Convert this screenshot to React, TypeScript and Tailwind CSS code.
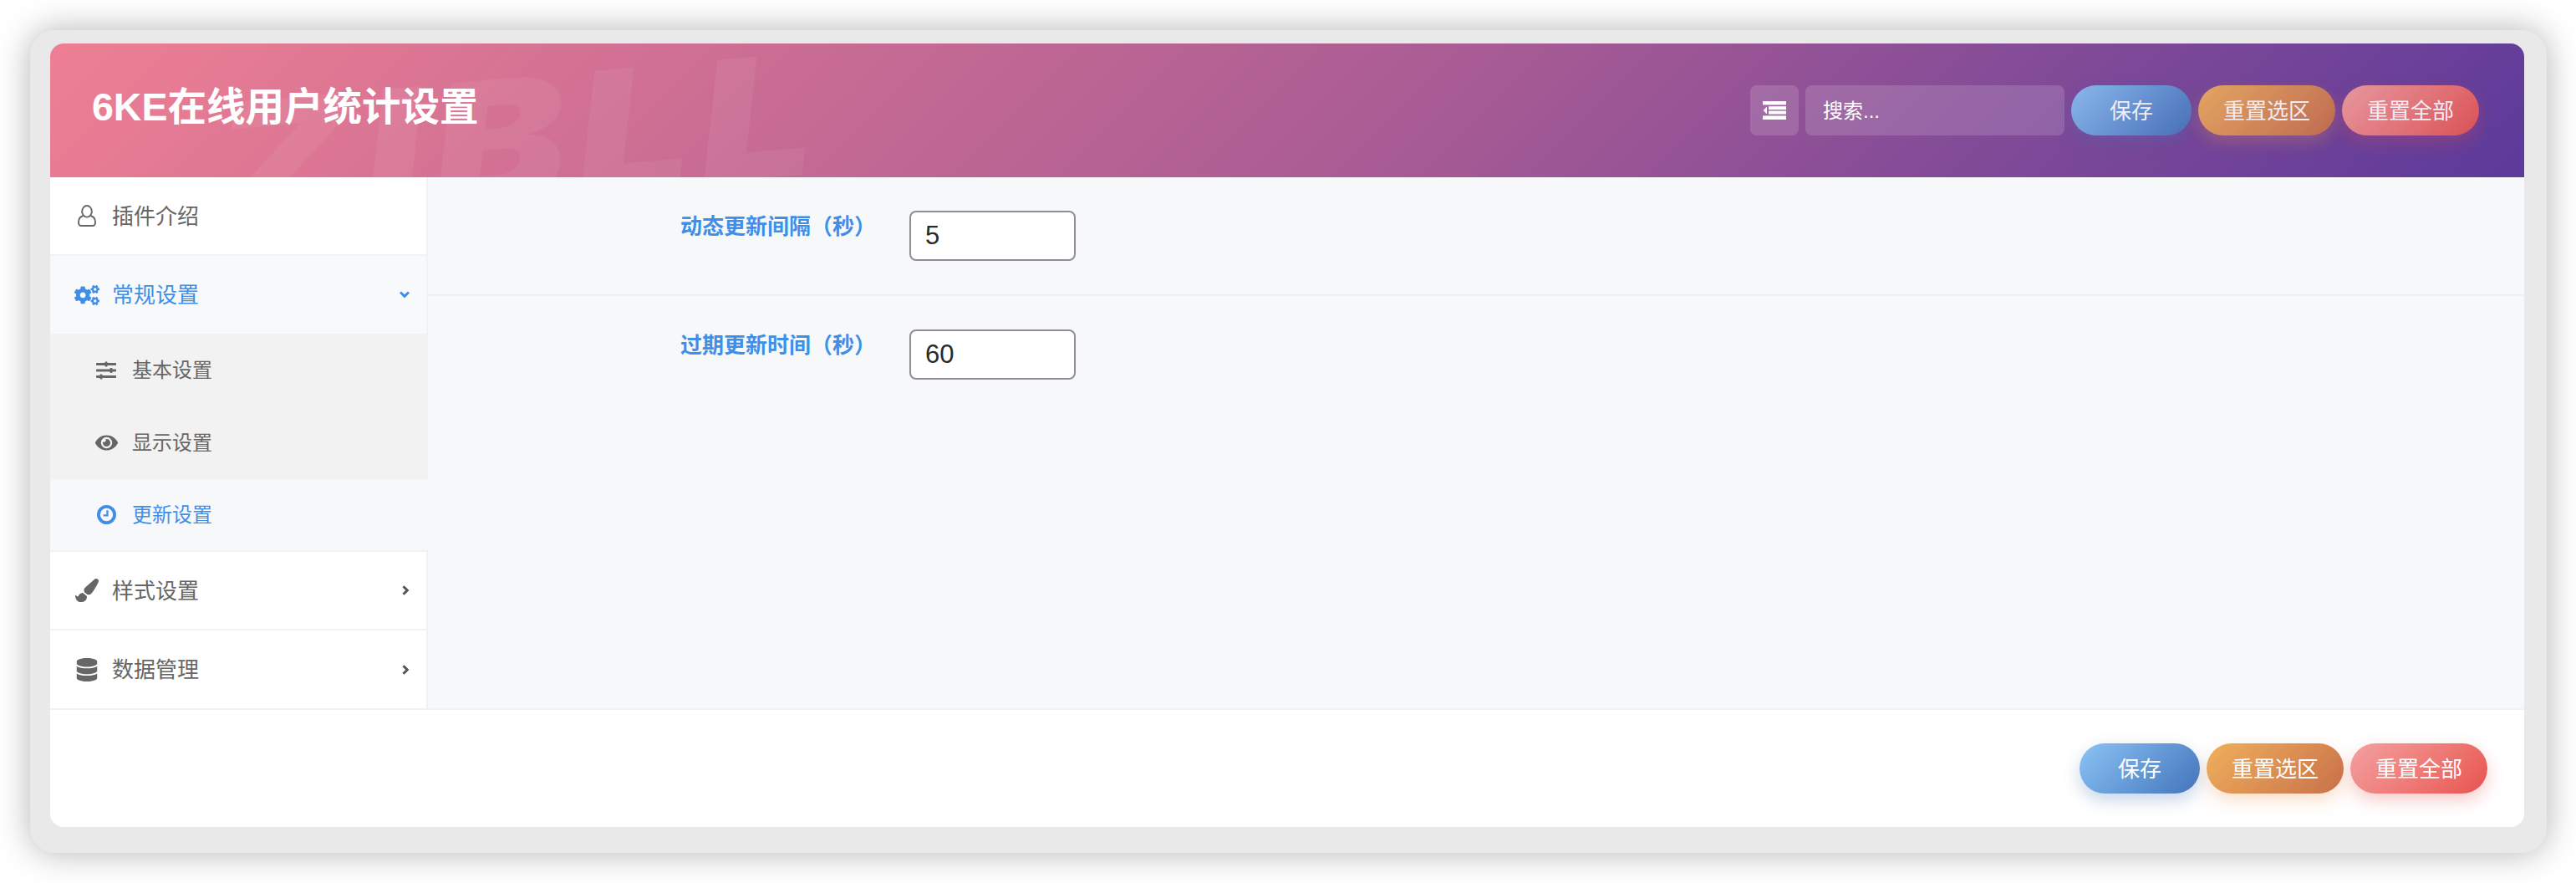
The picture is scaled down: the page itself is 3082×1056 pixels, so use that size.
import React from 'react';
import { FaCogs, FaSlidersH, FaEye, FaPaintBrush, FaDatabase } from 'react-icons/fa';

const UserIcon = () => (
  <svg viewBox="0 0 22 26" className="w-[22px] h-[26px]" fill="none" stroke="currentColor" strokeWidth="1.9">
    <ellipse cx="11" cy="7.8" rx="5.8" ry="6.8" />
    <path d="M6.6 13C3 14 1 16.6 1 20.5v1.3A3.2 3.2 0 0 0 4.2 25h13.6a3.2 3.2 0 0 0 3.2-3.2v-1.3c0-3.9-2-6.5-5.6-7.5" />
  </svg>
);

const ClockIcon = () => (
  <svg viewBox="0 0 24 24" className="w-[23px] h-[23px]" fill="none" stroke="currentColor">
    <circle cx="12" cy="12" r="10" strokeWidth="4" />
    <path d="M13 6.5v6.5H8" strokeWidth="2.4" />
  </svg>
);

const OutdentIcon = () => (
  <svg viewBox="0 0 28 22" className="w-[28px] h-[22px]" fill="currentColor">
    <rect x="0" y="0" width="28" height="4.4" />
    <rect x="7" y="6.2" width="21" height="4" />
    <rect x="7" y="11.6" width="21" height="4" />
    <rect x="0" y="17.4" width="28" height="4.6" />
    <path d="M5 6.4v9.2L0.6 11z" />
  </svg>
);

const ChevronRight = () => (
  <svg viewBox="0 0 9 12" className="w-[9px] h-[12px] text-[#555555]" fill="none" stroke="currentColor" strokeWidth="3">
    <path d="M1.5 1.2 6.3 6l-4.8 4.8" />
  </svg>
);

const ChevronDown = () => (
  <svg viewBox="0 0 12 9" className="w-[12px] h-[9px]" fill="none" stroke="currentColor" strokeWidth="3">
    <path d="M1 1.5 6 6.3l5-4.8" />
  </svg>
);

const MenuRow = ({ icon, label, active, open, chevron = true, className = '' }: any) => (
  <div className={`flex items-center pl-[29px] pr-[20px] ${active ? 'bg-[#f8f9fa] text-[#3f8fe9]' : 'bg-white text-[#666666]'} ${className}`}>
    <span className="w-[30px] flex justify-center">{icon}</span>
    <span className="ml-[15px] text-[26px] flex-1 relative top-[1px]">{label}</span>
    {chevron && (open ? <ChevronDown /> : <ChevronRight />)}
  </div>
);

const SubRow = ({ icon, label, active, className = '' }: any) => (
  <div className={`flex items-center pl-[52px] w-[452px] ${active ? 'bg-[#f6f8fa] text-[#3f8fe9]' : 'bg-[#f2f2f2] text-[#666666]'} ${className}`}>
    <span className="w-[30px] flex justify-center">{icon}</span>
    <span className="ml-[16px] text-[24px]">{label}</span>
  </div>
);

const FieldRow = ({ label, value, last }: { label: string; value: string; last?: boolean }) => (
  <div className={`flex items-start pl-[302px] pt-[40px] ${last ? '' : 'h-[142px] border-b-2 border-[#eeeff1]'}`}>
    <label className="w-[274px] mt-[1px] text-[26px] leading-[36px] font-semibold text-[#3f8fe9]">{label}</label>
    <input
      readOnly
      defaultValue={value}
      className="w-[199px] h-[60px] px-[17px] bg-white border-2 border-[#8e8e93] rounded-[8px] text-[31px] text-[#2a2a2a] font-['Liberation_Sans',sans-serif] outline-none"
    />
  </div>
);

const ActionButtons = ({ header }: { header?: boolean }) => (
  <div className={`flex gap-[8px] text-white text-[26px] ${header ? 'opacity-90' : ''}`}>
    <button className="w-[144px] h-[60px] pt-[2px] rounded-[30px] bg-linear-135 from-[#8bc4f5] to-[#4474bb] shadow-[0_8px_20px_rgba(68,116,187,0.3)]">保存</button>
    <button className="w-[164px] h-[60px] pt-[2px] rounded-[30px] bg-linear-135 from-[#efb05c] to-[#c9704a] shadow-[0_8px_20px_rgba(239,150,80,0.3)]">重置选区</button>
    <button className="w-[164px] h-[60px] pt-[2px] rounded-[30px] bg-linear-135 from-[#f3a0a0] to-[#e8524f] shadow-[0_8px_20px_rgba(232,82,79,0.3)]">重置全部</button>
  </div>
);

export default function App() {
  return (
    <div className="h-[1056px] pt-[36px] pl-[36px] pr-[35px] bg-white font-['Liberation_Sans','Noto_Sans_CJK_SC',sans-serif]">
      <div className="h-[984px] pt-[16px] pb-[31px] pl-[24px] pr-[27px] bg-[#e9e9e9] rounded-[30px] shadow-[0_0_40px_rgba(0,0,0,0.3)]">
        <div className="h-full flex flex-col bg-white rounded-[16px] overflow-hidden">
          {/* Header */}
          <div className="relative h-[160px] shrink-0 flex items-center pl-[50px] pr-[54px] overflow-hidden bg-linear-135/srgb from-[#ee7f93] via-[#a95c94] via-55% to-[#5c3a9b]">
            <span className="absolute left-[197px] top-[45px] origin-left -rotate-[5deg] scale-x-[1.2] text-[200px] leading-none italic font-black tracking-[10px] text-white/6 font-['Inter',sans-serif]">
              ZIBLL
            </span>
            <h1 className="relative -mt-[7px] text-[46.5px] font-bold text-white">6KE在线用户统计设置</h1>
            <div className="relative ml-auto flex items-center gap-[8px]">
              <div className="w-[58px] h-[60px] rounded-[8px] bg-white/15 flex items-center justify-center text-white">
                <OutdentIcon />
              </div>
              <input
                readOnly
                placeholder="搜索..."
                className="w-[310px] h-[60px] px-[21px] pt-[2px] rounded-[8px] bg-white/15 text-[24px] text-white placeholder:text-white outline-none"
              />
              <ActionButtons header />
            </div>
          </div>

          {/* Body */}
          <div className="flex h-[635px] shrink-0 bg-[#f7f8fa]">
            <div className="w-[452px] shrink-0 border-r-2 border-[#f2f2f2] flex flex-col">
              <MenuRow icon={<UserIcon />} label="插件介绍" chevron={false} className="h-[94px] border-b-2 border-[#f2f2f2]" />
              <MenuRow icon={<FaCogs className="w-[32px] h-[32px]" />} label="常规设置" active open className="h-[93px]" />
              <SubRow icon={<FaSlidersH className="w-[24px] h-[24px]" />} label="基本设置" className="h-[87px]" />
              <SubRow icon={<FaEye className="w-[27px] h-[27px]" />} label="显示设置" className="h-[87px]" />
              <SubRow icon={<ClockIcon />} label="更新设置" active className="h-[85px]" />
              <MenuRow icon={<FaPaintBrush className="w-[28px] h-[28px]" />} label="样式设置" className="h-[96px] border-y-2 border-[#f2f2f2]" />
              <MenuRow icon={<FaDatabase className="w-[28px] h-[28px]" />} label="数据管理" className="h-[93px]" />
            </div>
            <div className="flex-1 min-w-0">
              <FieldRow label="动态更新间隔（秒）" value="5" />
              <FieldRow label="过期更新时间（秒）" value="60" last />
            </div>
          </div>

          {/* Footer */}
          <div className="flex-1 border-t-2 border-[#f2f2f2] flex justify-end items-start pt-[40px] pr-[44px]">
            <ActionButtons />
          </div>
        </div>
      </div>
    </div>
  );
}
